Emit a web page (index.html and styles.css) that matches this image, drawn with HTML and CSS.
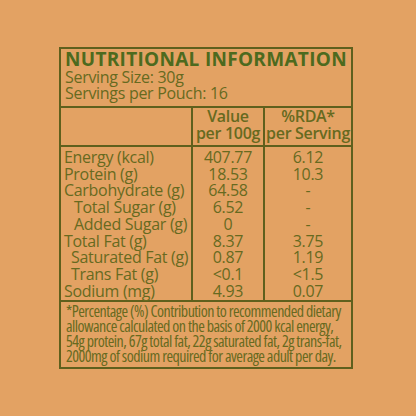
FILE: index.html
```html
<!DOCTYPE html>
<html lang="en">
<head>
  <meta charset="UTF-8">
  <title>Nutritional Information</title>
  <link rel="stylesheet" href="styles.css">
</head>
<body>
  <div class="label">
    <div class="label-head">
      <h1>NUTRITIONAL INFORMATION</h1>
      <p>Serving Size: 30g</p>
      <p>Servings per Pouch: 16</p>
    </div>

    <table class="facts">
      <thead>
        <tr>
          <th></th>
          <th>Value<br>per 100g</th>
          <th>%RDA*<br>per Serving</th>
        </tr>
      </thead>
      <tbody>
        <tr><td>Energy (kcal)</td><td>407.77</td><td>6.12</td></tr>
        <tr><td>Protein (g)</td><td>18.53</td><td>10.3</td></tr>
        <tr><td>Carbohydrate (g)</td><td>64.58</td><td>-</td></tr>
        <tr><td class="sub">Total Sugar (g)</td><td>6.52</td><td>-</td></tr>
        <tr><td class="sub">Added Sugar (g)</td><td>0</td><td>-</td></tr>
        <tr><td>Total Fat (g)</td><td>8.37</td><td>3.75</td></tr>
        <tr><td class="sub2">Saturated Fat (g)</td><td>0.87</td><td>1.19</td></tr>
        <tr><td class="sub2">Trans Fat (g)</td><td>&lt;0.1</td><td>&lt;1.5</td></tr>
        <tr><td>Sodium (mg)</td><td>4.93</td><td>0.07</td></tr>
      </tbody>
    </table>

    <p class="note">*Percentage (%) Contribution to recommended dietary<br>allowance calculated on the basis of 2000 kcal energy,<br>54g protein, 67g total fat, 22g saturated fat, 2g trans-fat,<br>2000mg of sodium required for average adult per day.</p>
  </div>
</body>
</html>
```

FILE: styles.css
```css
html, body {
  margin: 0;
  height: 100%;
}

body {
  background-color: #e3a263;
  font-family: "Open Sans", "Liberation Sans", sans-serif;
  color: #676a1f;
  padding-top: 47px;
  box-sizing: border-box;
}

.label {
  width: 294px;
  margin: 0 auto 0 59px;
  border: 2px solid #5f601d;
  box-sizing: border-box;
}

.label-head {
  padding: 1px 4px 5px 4px;
  border-bottom: 2px solid #5f601d;
}

.label-head h1 {
  margin: 0;
  font-size: 19px;
  line-height: 19px;
  font-weight: 700;
  color: #4d6a1e;
  letter-spacing: 0.3px;
}

.label-head p {
  margin: 0;
  font-size: 16px;
  line-height: 16px;
  letter-spacing: -0.3px;
}

.facts {
  width: 100%;
  border-collapse: collapse;
  font-size: 16px;
  letter-spacing: -0.3px;
}

.facts th {
  font-weight: 600;
  line-height: 17px;
  padding: 0 0 3px;
  border-bottom: 2px solid #5f601d;
}

.facts th:nth-child(2),
.facts td:nth-child(2) {
  width: 70px;
  border-left: 2px solid #5f601d;
  border-right: 2px solid #5f601d;
  text-align: center;
}

.facts th:nth-child(3),
.facts td:nth-child(3) {
  width: 86px;
  text-align: center;
}

.facts td {
  line-height: 16.7px;
  padding: 0;
}

.facts td:first-child {
  padding-left: 3px;
}

.facts tbody tr:first-child td {
  padding-top: 2px;
}

.facts tbody tr:last-child td {
  padding-bottom: 1px;
}

.facts td.sub {
  padding-left: 13px;
}

.facts td.sub2 {
  padding-left: 10px;
}

.note {
  margin: 0;
  border-top: 2px solid #5f601d;
  padding: 2px 0 3px 5px;
  font-family: "Open Sans", "DejaVu Sans", sans-serif;
  font-stretch: 75%;
  font-size: 16px;
  line-height: 15px;
  letter-spacing: -0.53px;
  white-space: nowrap;
}
```
